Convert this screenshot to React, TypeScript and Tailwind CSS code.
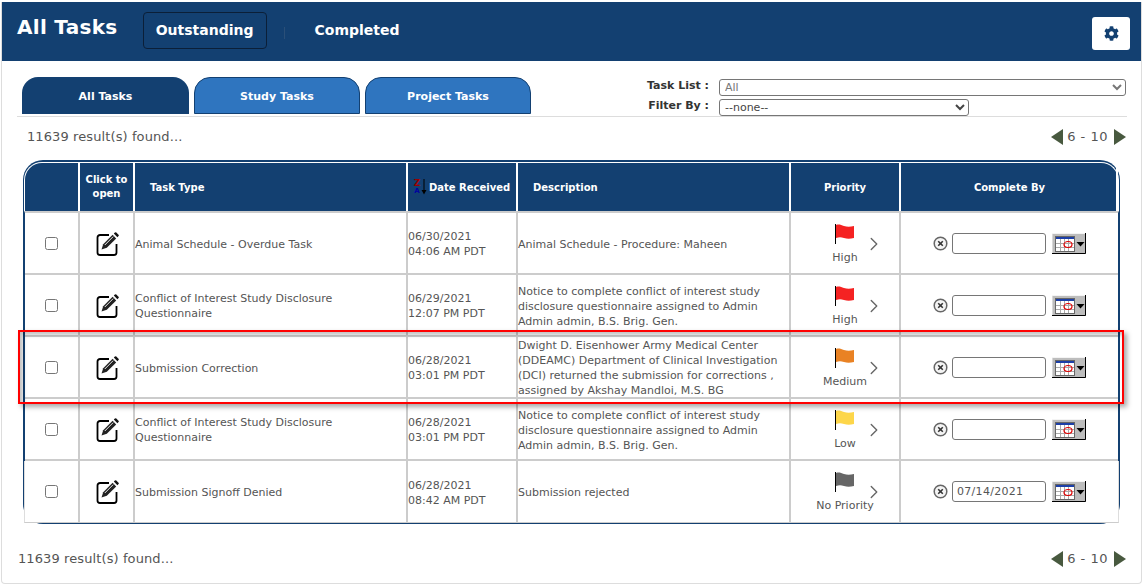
import { ChevronRight } from "lucide-react";
import { FaCog } from "react-icons/fa";

interface Task {
  type: string[];
  date: string;
  time: string;
  desc: string[];
  priority: string;
  flag: string;
  completeBy?: string;
}

const TASKS: Task[] = [
  { type: ["Animal Schedule - Overdue Task"], date: "06/30/2021", time: "04:06 AM PDT", desc: ["Animal Schedule - Procedure: Maheen"], priority: "High", flag: "#f52222" },
  {
    type: ["Conflict of Interest Study Disclosure", "Questionnaire"], date: "06/29/2021", time: "12:07 PM PDT",
    desc: ["Notice to complete conflict of interest study", "disclosure questionnaire assigned to Admin", "Admin admin, B.S. Brig. Gen."],
    priority: "High", flag: "#f52222",
  },
  {
    type: ["Submission Correction"], date: "06/28/2021", time: "03:01 PM PDT",
    desc: ["Dwight D. Eisenhower Army Medical Center", "(DDEAMC) Department of Clinical Investigation", "(DCI) returned the submission for corrections ,", "assigned by Akshay Mandloi, M.S. BG"],
    priority: "Medium", flag: "#e98224",
  },
  {
    type: ["Conflict of Interest Study Disclosure", "Questionnaire"], date: "06/28/2021", time: "03:01 PM PDT",
    desc: ["Notice to complete conflict of interest study", "disclosure questionnaire assigned to Admin", "Admin admin, B.S. Brig. Gen."],
    priority: "Low", flag: "#fdd64a",
  },
  { type: ["Submission Signoff Denied"], date: "06/28/2021", time: "08:42 AM PDT", desc: ["Submission rejected"], priority: "No Priority", flag: "#666666", completeBy: "07/14/2021" },
];

const COLS = "grid grid-cols-[55px_55px_273px_110px_273px_110px_217px]";
const HEAD = "flex items-center border-r-2 border-white h-full text-[10px] font-bold text-white";
const CELL = "flex items-center border-r-2 border-[#ccc] h-full";
const TEXT_CELL = "flex items-center border-r-2 border-[#ccc] h-full pt-[2px]";

function Flag({ color }: { color: string }) {
  return (
    <svg width="20" height="21" viewBox="0 0 20 21">
      <path d="M0.5 0v20" stroke="#000" strokeWidth="1" />
      <path d="M1 1c3-1 5 0 8 1s6 1 10 0v12c-4 1-7 1-10 0s-5-1-8 0z" fill={color} />
    </svg>
  );
}

function EditIcon() {
  return (
    <svg width="24" height="25" viewBox="0 0 24 25">
      <path d="M14 4H5a2.5 2.5 0 0 0-2.5 2.5v15A2.5 2.5 0 0 0 5 24h14a2.5 2.5 0 0 0 2.5-2.5V13" fill="none" stroke="#000" strokeWidth="1.8" />
      <path d="M6.5 18.5l1.7-5.3L17.6 3.8l3.6 3.6-9.4 9.4z" fill="#222" />
      <path d="M18.8 2.6l1.1-1.1a1 1 0 0 1 1.4 0l2.2 2.2a1 1 0 0 1 0 1.4l-1.1 1.1z" fill="#111" />
      <path d="M9.8 14l8.4-8.4" stroke="#fff" strokeWidth="0.9" />
    </svg>
  );
}

function ClearIcon() {
  return (
    <svg width="15" height="15" viewBox="0 0 15 15">
      <circle cx="7.5" cy="7.5" r="6.3" fill="#f4f4f4" stroke="#666" strokeWidth="1.5" />
      <path d="M5.2 5.2l4.6 4.6M9.8 5.2l-4.6 4.6" stroke="#333" strokeWidth="1.6" />
    </svg>
  );
}

function CalendarButton() {
  return (
    <svg width="34" height="21" viewBox="0 0 34 21">
      <rect x="0" y="0" width="34" height="21" fill="#bdbdbd" />
      <path d="M0 20.5V0.5h33.5" fill="none" stroke="#f4f4f4" />
      <path d="M0 20.5h33.5V0" fill="none" stroke="#000" />
      <rect x="3.5" y="3.5" width="19" height="15" fill="#fff" stroke="#666" />
      <rect x="4" y="4" width="18" height="2" fill="#1c3fa8" />
      <path d="M4 10.5h18M4 14.5h18M8.5 6v12M12.5 6v12M16.5 6v12" stroke="#aaa" strokeWidth="1" />
      <ellipse cx="16" cy="11.5" rx="4" ry="3" fill="none" stroke="#e00000" strokeWidth="1.2" />
      <path d="M24.5 9h8l-4 4.5z" fill="#000" />
    </svg>
  );
}

function SortIcon() {
  return (
    <span className="flex items-center mr-[2px]">
      <span className="flex flex-col items-center font-bold leading-[8px] w-[8px] font-['DejaVu_Sans',sans-serif]">
        <span className="text-[9px] text-[#9a0000]">Z</span>
        <span className="text-[7px] text-[#0000a0]">A</span>
      </span>
      <svg width="6" height="16" viewBox="0 0 6 16">
        <path d="M3 0v13" stroke="#000" strokeWidth="1" />
        <path d="M0.5 11h5L3 15.5z" fill="#000" />
      </svg>
    </span>
  );
}

function Pager() {
  return (
    <div className="flex items-center text-[13px] text-[#555]">
      <span className="w-0 h-0 border-y-[8px] border-y-transparent border-r-[12px] border-r-[#48593f]" />
      <span className="ml-[4px] mr-[6px] tracking-[0.5px]">6 - 10</span>
      <span className="w-0 h-0 border-y-[8px] border-y-transparent border-l-[12px] border-l-[#48593f]" />
    </div>
  );
}

export default function App() {
  return (
    <div className="relative w-[1143px] h-[585px] bg-white pt-px pl-px font-['DejaVu_Sans',sans-serif] overflow-hidden">
      <div className="w-[1141px] h-[582px] border-x border-b border-[#ddd] rounded-b-[4px]">
        {/* Header */}
        <div className="h-[59px] mt-px bg-[#134071] flex items-start text-white">
          <h1 className="ml-[15px] mt-[11px] text-[20px] leading-[28px] font-bold tracking-[0.3px]">All Tasks</h1>
          <button className="ml-[25px] mt-[10px] w-[124px] h-[37px] border border-[#0b1f38] rounded-[4px] text-[14px] font-bold">Outstanding</button>
          <span className="ml-[17px] mt-[25px] w-px h-[12px] bg-[#2a4f78]" />
          <span className="ml-[30px] mt-[18px] text-[14px] leading-[20px] font-bold">Completed</span>
          <button className="ml-auto mr-[11px] mt-[15px] w-[38px] h-[33px] bg-white rounded-[3px] flex items-center justify-center text-[#134071]">
            <FaCog size={15} />
          </button>
        </div>

        {/* Tabs + filters */}
        <div className="ml-[15px] w-[1110px] h-[40px] mt-[16px] pl-[5px] border-b border-[#ddd] flex items-start">
          <div className="flex gap-[5px]">
            <div className="w-[167px] h-[37px] rounded-t-[16px] bg-[#134071] flex items-center justify-center pt-[3px] text-[11px] font-bold text-white">All Tasks</div>
            <div className="w-[166px] h-[37px] rounded-t-[16px] bg-[#2f75bf] border border-[#134071] flex items-center justify-center pt-[3px] text-[11px] font-bold text-white">Study Tasks</div>
            <div className="w-[166px] h-[37px] rounded-t-[16px] bg-[#2f75bf] border border-[#134071] flex items-center justify-center pt-[3px] text-[11px] font-bold text-white">Project Tasks</div>
          </div>
          <div className="ml-auto mr-px flex flex-col gap-[3px] pt-[2px] text-[11px] font-bold text-[#333]">
            <div className="flex items-center justify-end gap-[10px] h-[17px]">
              <span className="mb-[2px]">Task List :</span>
              <select defaultValue="All" className="w-[407px] h-[17px] border border-[#767676] rounded-[3px] text-[11px] font-normal text-[#777] pl-[1px]">
                <option>All</option>
              </select>
            </div>
            <div className="flex items-center gap-[10px] h-[17px]">
              <span className="ml-auto mb-[2px]">Filter By :</span>
              <select defaultValue="--none--" className="w-[250px] h-[17px] mr-[157px] border border-[#767676] rounded-[3px] text-[11px] font-normal text-[#444] pl-[1px]">
                <option>--none--</option>
              </select>
            </div>
          </div>
        </div>

        {/* Result count */}
        <div className="ml-[25px] mr-[15px] h-[43px] pt-[11px] flex items-start justify-between text-[13px] leading-[18px] text-[#555]">
          <span className="tracking-[0.1px]">11639 result(s) found...</span>
          <Pager />
        </div>

        {/* Table */}
        <div className="ml-[21px] w-[1097px] h-[364px] pt-[2px] px-px pb-px bg-[#134071] rounded-[20px]">
          <div className={`${COLS} h-[49px] border-t border-x border-white rounded-t-[18px] items-center`}>
            <div className={HEAD} />
            <div className={`${HEAD} justify-center text-center leading-[14px]`}>Click to<br />open</div>
            <div className={`${HEAD} pl-[15px]`}>Task Type</div>
            <div className={`${HEAD} pl-[5px]`}><SortIcon />Date Received</div>
            <div className={`${HEAD} pl-[15px]`}>Description</div>
            <div className={`${HEAD} justify-center`}>Priority</div>
            <div className={`${HEAD} justify-center border-r-0 pl-[2px]`}>Complete By</div>
          </div>
          <div className="bg-white border-t-2 border-[#ccc] border-x border-x-[#134071]">
            {TASKS.map((t, i) => (
              <div
                key={i}
                className={`${COLS} grid-rows-[minmax(0,1fr)] h-[62px] text-[11px] leading-[15px] text-[#555] ${i < TASKS.length - 1 ? "border-b-2 border-[#ccc]" : "-mx-px border-x border-x-[#ddd] border-b border-b-[#ccc] bg-white"}`}
              >
                <div className={`${CELL} justify-center`}>
                  <input type="checkbox" className="w-[13px] h-[13px]" />
                </div>
                <div className={`${CELL} justify-center`}>
                  <EditIcon />
                </div>
                <div className={TEXT_CELL}>
                  <div>{t.type.map((l) => <div key={l}>{l}</div>)}</div>
                </div>
                <div className={TEXT_CELL}>
                  <div><div>{t.date}</div><div>{t.time}</div></div>
                </div>
                <div className={TEXT_CELL}>
                  <div>{t.desc.map((l) => <div key={l}>{l}</div>)}</div>
                </div>
                <div className={`${CELL} relative flex-col justify-start pt-[11px]`}>
                  <Flag color={t.flag} />
                  <span className="mt-[5px]">{t.priority}</span>
                  <ChevronRight size={22} strokeWidth={1.5} className="absolute right-[14px] top-[20px] text-[#666]" />
                </div>
                <div className="flex items-center pl-[32px] h-full">
                  <ClearIcon />
                  <input
                    readOnly
                    value={t.completeBy ?? ""}
                    className="ml-[4px] w-[94px] h-[21px] px-[4px] border border-[#767676] rounded-[3px] text-[11px] tracking-[0.3px] text-[#555]"
                  />
                  <span className="ml-[6px] flex"><CalendarButton /></span>
                </div>
              </div>
            ))}
          </div>
        </div>

        {/* Footer */}
        <div className="ml-[16px] mr-[15px] mt-[26px] flex items-center justify-between text-[13px] leading-[18px] text-[#555]">
          <span className="tracking-[0.1px]">11639 result(s) found...</span>
          <Pager />
        </div>
      </div>

      {/* Highlight box drawn over the third row */}
      <div className="absolute left-[18px] top-[330px] w-[1106px] h-[74px] border-2 border-[#f00] shadow-[3px_3px_5px_rgba(0,0,0,0.35),inset_3px_3px_4px_rgba(0,0,0,0.25)] pointer-events-none" />
    </div>
  );
}
